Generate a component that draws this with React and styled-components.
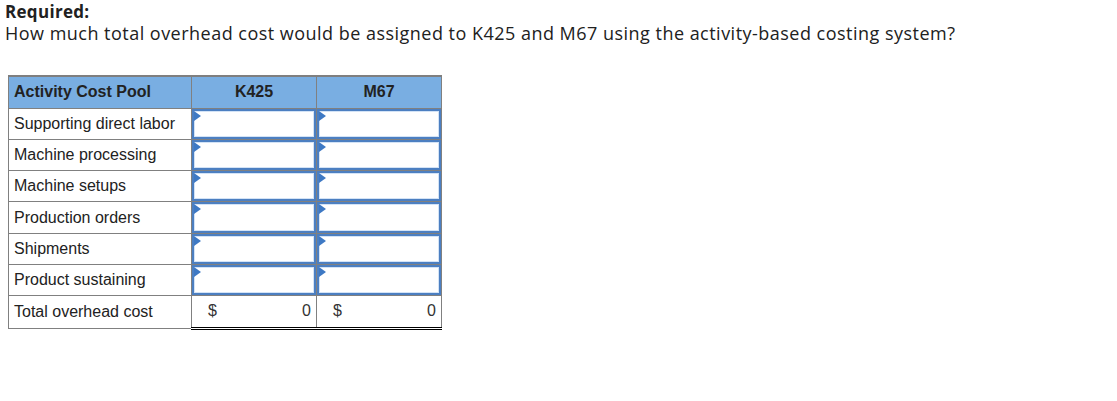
import React from 'react';
import styled, {createGlobalStyle} from 'styled-components';

const GlobalStyle = createGlobalStyle`
  body {
    margin: 0;
    padding: 2px 5px;
    background: #fff;
    font-family: "Open Sans", "Liberation Sans", sans-serif;
    color: #212121;
  }
`;

const Heading = styled.div`
  font-weight: 700;
  font-size: 17px;
  line-height: 20px;
  letter-spacing: 0.3px;
`;

const Question = styled.div`
  font-size: 18px;
  line-height: 22px;
  letter-spacing: 0.48px;
  margin-bottom: 31px;
`;

const Table = styled.table`
  border-collapse: collapse;
  margin-left: 3px;
  font-family: "Liberation Sans", Arial, sans-serif;
  font-size: 16px;
  color: #222;
  border-top: 2px solid #7f7f7f;
`;

const Head = styled.th`
  background: #79aee2;
  height: 32px;
  padding: 0 5px;
  border: 1px solid #808080;
  font-weight: 700;
  width: ${p => p.w}px;
  text-align: ${p => (p.left ? 'left' : 'center')};
  box-sizing: border-box;
`;

const Label = styled.td`
  height: 30.3px;
  padding: 0 5px;
  border: 1px solid #808080;
  white-space: nowrap;
`;

const InputCell = styled.td`
  padding: 0;
  border: 1px solid #808080;
  height: 30.3px;
`;

const Box = styled.div`
  height: 30.3px;
  box-sizing: border-box;
  border: 2px solid #4c7fc1;
  box-shadow: inset 0 0 0 1px #d3e3f6;
  background: #fff;
  position: relative;
`;

const Marker = styled.span`
  position: absolute;
  left: 0;
  top: 0;
  width: 0;
  height: 0;
  border-top: 5px solid transparent;
  border-bottom: 5px solid transparent;
  border-left: 7px solid #3e79c4;
`;

const TotalCell = styled.td`
  height: 30.3px;
  padding: 0 5px 0 16px;
  border-left: 1px solid #808080;
  border-right: 1px solid #808080;
  border-top: 1px solid #000;
  border-bottom: 3px double #000;
`;

const Amount = styled.div`
  display: flex;
  justify-content: space-between;
  color: #333;
`;

const pools = [
  'Supporting direct labor',
  'Machine processing',
  'Machine setups',
  'Production orders',
  'Shipments',
  'Product sustaining',
];

const Entry = () => (
  <InputCell>
    <Box>
      <Marker />
    </Box>
  </InputCell>
);

export default function App() {
  return (
    <>
      <GlobalStyle />
      <Heading>Required:</Heading>
      <Question>
        How much total overhead cost would be assigned to K425 and M67 using the activity-based costing system?
      </Question>
      <Table>
        <thead>
          <tr>
            <Head w={183} left>Activity Cost Pool</Head>
            <Head w={125}>K425</Head>
            <Head w={125}>M67</Head>
          </tr>
        </thead>
        <tbody>
          {pools.map(p => (
            <tr key={p}>
              <Label>{p}</Label>
              <Entry />
              <Entry />
            </tr>
          ))}
          <tr>
            <Label>Total overhead cost</Label>
            <TotalCell>
              <Amount><span>$</span><span>0</span></Amount>
            </TotalCell>
            <TotalCell>
              <Amount><span>$</span><span>0</span></Amount>
            </TotalCell>
          </tr>
        </tbody>
      </Table>
    </>
  );
}
